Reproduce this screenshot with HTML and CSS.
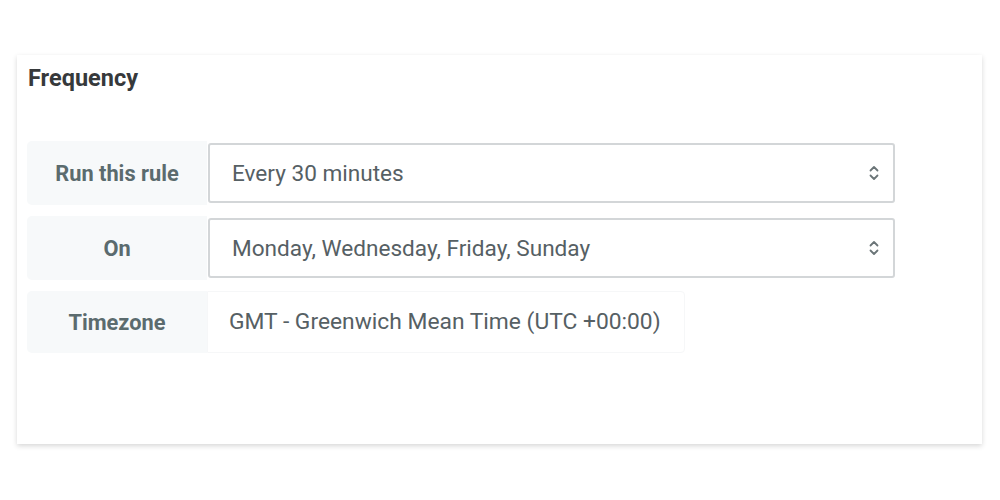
FILE: index.html
```html
<!DOCTYPE html>
<html>
<head>
<meta charset="utf-8">
<link rel="stylesheet" href="styles.css">
</head>
<body>
<div class="card">
  <h2 class="title">Frequency</h2>
  <div class="rows">
    <div class="row">
      <div class="label">Run this rule</div>
      <div class="select"><span>Every 30 minutes</span>
        <svg class="chev" width="10" height="16" viewBox="0 0 10 16"><path d="M1.5 5.5 L5 2 L8.5 5.5 M1.5 10.5 L5 14 L8.5 10.5" fill="none" stroke="#6b7578" stroke-width="1.8" stroke-linecap="round" stroke-linejoin="round"/></svg>
      </div>
    </div>
    <div class="row">
      <div class="label">On</div>
      <div class="select"><span>Monday, Wednesday, Friday, Sunday</span>
        <svg class="chev" width="10" height="16" viewBox="0 0 10 16"><path d="M1.5 5.5 L5 2 L8.5 5.5 M1.5 10.5 L5 14 L8.5 10.5" fill="none" stroke="#6b7578" stroke-width="1.8" stroke-linecap="round" stroke-linejoin="round"/></svg>
      </div>
    </div>
    <div class="row row-static">
      <div class="label">Timezone</div>
      <div class="value">GMT - Greenwich Mean Time (UTC +00:00)</div>
    </div>
  </div>
</div>
</body>
</html>
```

FILE: styles.css
```css
html, body {
  margin: 0;
  padding: 0;
  background: #ffffff;
}
body {
  padding: 55px 18px 56px 17px;
  font-family: Roboto, "Liberation Sans", sans-serif;
}
.card {
  width: 965px;
  height: 389px;
  box-sizing: border-box;
  background: #fff;
  box-shadow: 0 2px 5px rgba(0,0,0,0.16);
  padding: 10px 10px 0 10px;
}
.title {
  margin: 0 0 0 1px;
  font-size: 23.5px;
  font-weight: 700;
  color: #36393b;
  line-height: 26px;
}
.rows {
  margin-top: 50px;
  display: flex;
  flex-direction: column;
  gap: 11px;
}
.row {
  display: flex;
  height: 64px;
}
.label {
  width: 180px;
  flex: none;
  background: #f7f9fa;
  border-radius: 5px 0 0 5px;
  display: flex;
  align-items: center;
  justify-content: center;
  font-size: 21.8px;
  font-weight: 700;
  color: #5b6b6e;
}
.select {
  margin: 2px 0 2px 1px;
  width: 687px;
  box-sizing: border-box;
  border: 2px solid #d3d6d8;
  border-radius: 3px;
  display: flex;
  align-items: center;
  justify-content: space-between;
  padding: 0 14px 0 22px;
  font-size: 22.6px;
  color: #566064;
}
.row-static {
  height: 62px;
}
.value {
  width: 478px;
  box-sizing: border-box;
  background: #fff;
  border: 1px solid #f6f7f8;
  border-radius: 0 4px 4px 0;
  display: flex;
  align-items: center;
  padding: 0 0 2px 21px;
  font-size: 22.8px;
  color: #566064;
}
```
